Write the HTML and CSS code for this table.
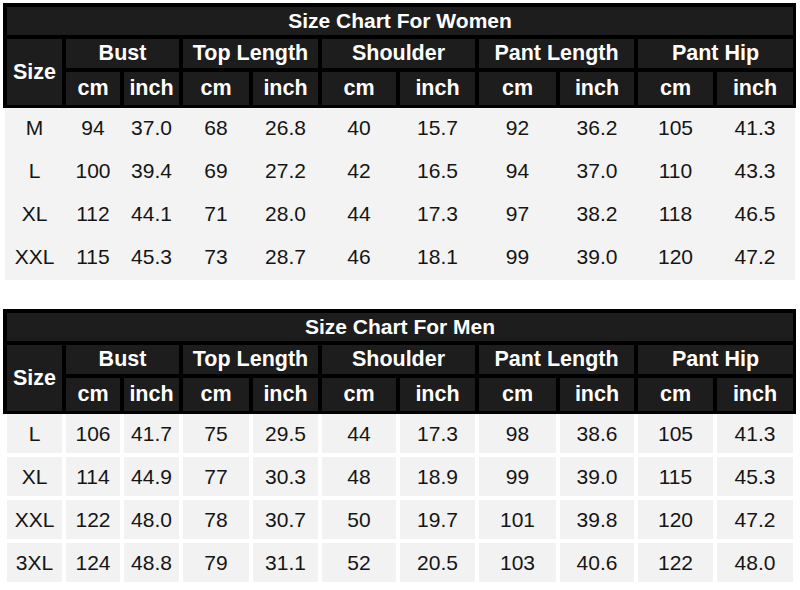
FILE: index.html
```html
<!DOCTYPE html>
<html>
<head>
<meta charset="utf-8">
<link rel="stylesheet" href="styles.css">
</head>
<body>
<div class="chart women">
  <div class="head">
    <div class="title">Size Chart For Women</div>
    <div class="hgrid">
      <div class="hc size">Size</div>
      <div class="hc span2">Bust</div>
      <div class="hc span2">Top Length</div>
      <div class="hc span2">Shoulder</div>
      <div class="hc span2">Pant Length</div>
      <div class="hc span2">Pant Hip</div>
      <div class="hc">cm</div><div class="hc">inch</div>
      <div class="hc">cm</div><div class="hc">inch</div>
      <div class="hc">cm</div><div class="hc">inch</div>
      <div class="hc">cm</div><div class="hc">inch</div>
      <div class="hc">cm</div><div class="hc">inch</div>
    </div>
  </div>
  <div class="bgrid">
    <div class="bc">M</div><div class="bc">94</div><div class="bc">37.0</div><div class="bc">68</div><div class="bc">26.8</div><div class="bc">40</div><div class="bc">15.7</div><div class="bc">92</div><div class="bc">36.2</div><div class="bc">105</div><div class="bc">41.3</div>
    <div class="bc">L</div><div class="bc">100</div><div class="bc">39.4</div><div class="bc">69</div><div class="bc">27.2</div><div class="bc">42</div><div class="bc">16.5</div><div class="bc">94</div><div class="bc">37.0</div><div class="bc">110</div><div class="bc">43.3</div>
    <div class="bc">XL</div><div class="bc">112</div><div class="bc">44.1</div><div class="bc">71</div><div class="bc">28.0</div><div class="bc">44</div><div class="bc">17.3</div><div class="bc">97</div><div class="bc">38.2</div><div class="bc">118</div><div class="bc">46.5</div>
    <div class="bc">XXL</div><div class="bc">115</div><div class="bc">45.3</div><div class="bc">73</div><div class="bc">28.7</div><div class="bc">46</div><div class="bc">18.1</div><div class="bc">99</div><div class="bc">39.0</div><div class="bc">120</div><div class="bc">47.2</div>
  </div>
</div>

<div class="chart men">
  <div class="head">
    <div class="title">Size Chart For Men</div>
    <div class="hgrid">
      <div class="hc size">Size</div>
      <div class="hc span2">Bust</div>
      <div class="hc span2">Top Length</div>
      <div class="hc span2">Shoulder</div>
      <div class="hc span2">Pant Length</div>
      <div class="hc span2">Pant Hip</div>
      <div class="hc">cm</div><div class="hc">inch</div>
      <div class="hc">cm</div><div class="hc">inch</div>
      <div class="hc">cm</div><div class="hc">inch</div>
      <div class="hc">cm</div><div class="hc">inch</div>
      <div class="hc">cm</div><div class="hc">inch</div>
    </div>
  </div>
  <div class="bgrid">
    <div class="bc">L</div><div class="bc">106</div><div class="bc">41.7</div><div class="bc">75</div><div class="bc">29.5</div><div class="bc">44</div><div class="bc">17.3</div><div class="bc">98</div><div class="bc">38.6</div><div class="bc">105</div><div class="bc">41.3</div>
    <div class="bc">XL</div><div class="bc">114</div><div class="bc">44.9</div><div class="bc">77</div><div class="bc">30.3</div><div class="bc">48</div><div class="bc">18.9</div><div class="bc">99</div><div class="bc">39.0</div><div class="bc">115</div><div class="bc">45.3</div>
    <div class="bc">XXL</div><div class="bc">122</div><div class="bc">48.0</div><div class="bc">78</div><div class="bc">30.7</div><div class="bc">50</div><div class="bc">19.7</div><div class="bc">101</div><div class="bc">39.8</div><div class="bc">120</div><div class="bc">47.2</div>
    <div class="bc">3XL</div><div class="bc">124</div><div class="bc">48.8</div><div class="bc">79</div><div class="bc">31.1</div><div class="bc">52</div><div class="bc">20.5</div><div class="bc">103</div><div class="bc">40.6</div><div class="bc">122</div><div class="bc">48.0</div>
  </div>
</div>
</body>
</html>
```

FILE: styles.css
```css
html, body {
  margin: 0;
  padding: 0;
  background: #ffffff;
  width: 800px;
  height: 590px;
  overflow: hidden;
}

body {
  font-family: "Liberation Sans", Arial, sans-serif;
}

.chart {
  width: 800px;
}

.women {
  padding-top: 3px;
}

.men {
  margin-top: 29px;
}

.head {
  margin-left: 3px;
  width: 786px;
  background: #000000;
  padding: 4px 3px 3px 4px;
}

.title {
  height: 28px;
  margin-bottom: 4px;
  background: #1d1d1d;
  color: #ffffff;
  font-weight: bold;
  font-size: 21px;
  display: flex;
  align-items: center;
  justify-content: center;
}

.hgrid,
.bgrid {
  display: grid;
  grid-template-columns: 55px 54px 55px 66px 65px 74px 75px 77px 74px 75px 76px;
  column-gap: 4px;
}

.hgrid {
  grid-template-rows: 29px 33px;
  row-gap: 4px;
}

.hc {
  background: #1d1d1d;
  color: #ffffff;
  font-weight: bold;
  font-size: 21.5px;
  display: flex;
  align-items: center;
  justify-content: center;
}

.hc.size {
  grid-row: span 2;
}

.hc.span2 {
  grid-column: span 2;
}

.bc {
  display: flex;
  align-items: center;
  justify-content: center;
  font-size: 21px;
  color: #151515;
  padding-bottom: 4px;
  box-sizing: border-box;
}

.women .bgrid {
  margin-left: 5px;
  width: 788px;
  padding-left: 2px;
  background: #f3f3f3;
  grid-auto-rows: 43px;
}

.women .bc {
  background: transparent;
}

.men .bgrid {
  margin-left: 7px;
  width: 786px;
  grid-auto-rows: 39px;
  row-gap: 4px;
}

.men .bc {
  background: #f2f2f2;
  padding-bottom: 0;
}
```
